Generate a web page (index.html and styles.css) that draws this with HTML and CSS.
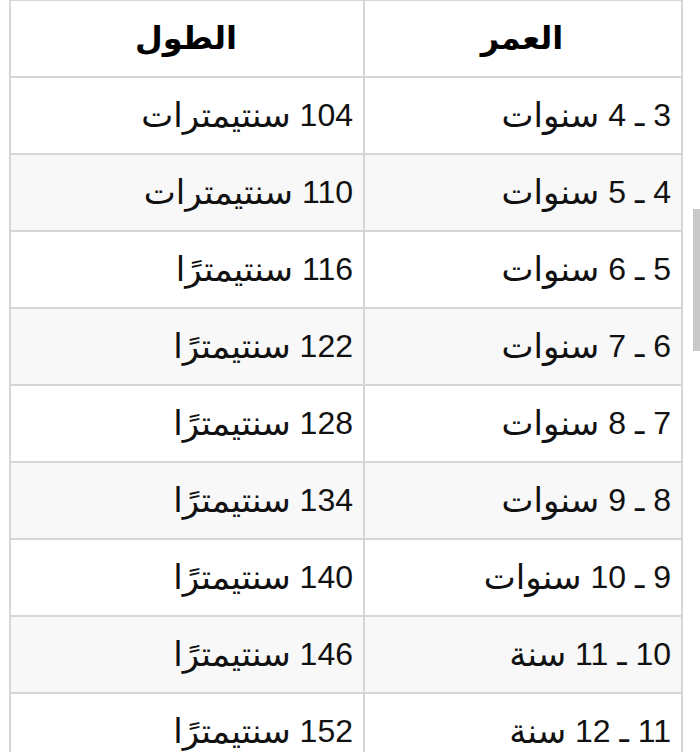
FILE: index.html
```html
<!DOCTYPE html>
<html lang="ar" dir="rtl">
<head>
<meta charset="utf-8">
<title>جدول المقاسات</title>
<link rel="stylesheet" href="styles.css">
</head>
<body>
<div class="page">
  <div class="table">
    <div class="cell head">العمر</div>
    <div class="cell head">الطول</div>

    <div class="cell">3 ـ 4 <span class="ar">سنوات</span></div>
    <div class="cell">104 <span class="ar">سنتيمترات</span></div>

    <div class="cell alt">4 ـ 5 <span class="ar">سنوات</span></div>
    <div class="cell alt">110 <span class="ar">سنتيمترات</span></div>

    <div class="cell">5 ـ 6 <span class="ar">سنوات</span></div>
    <div class="cell">116 <span class="ar">سنتيمترًا</span></div>

    <div class="cell alt">6 ـ 7 <span class="ar">سنوات</span></div>
    <div class="cell alt">122 <span class="ar">سنتيمترًا</span></div>

    <div class="cell">7 ـ 8 <span class="ar">سنوات</span></div>
    <div class="cell">128 <span class="ar">سنتيمترًا</span></div>

    <div class="cell alt">8 ـ 9 <span class="ar">سنوات</span></div>
    <div class="cell alt">134 <span class="ar">سنتيمترًا</span></div>

    <div class="cell">9 ـ 10 <span class="ar">سنوات</span></div>
    <div class="cell">140 <span class="ar">سنتيمترًا</span></div>

    <div class="cell alt">10 ـ 11 <span class="ar">سنة</span></div>
    <div class="cell alt">146 <span class="ar">سنتيمترًا</span></div>

    <div class="cell">11 ـ 12 <span class="ar">سنة</span></div>
    <div class="cell">152 <span class="ar">سنتيمترًا</span></div>
  </div>
  <div class="scrollbar"></div>
</div>
</body>
</html>
```

FILE: styles.css
```css
html, body {
  margin: 0;
  padding: 0;
  background: #ffffff;
}

body {
  width: 700px;
  height: 752px;
  overflow: hidden;
  font-family: "Liberation Sans", "DejaVu Sans", sans-serif;
  color: #111111;
}

.page {
  position: relative;
  width: 700px;
  height: 752px;
  overflow: hidden;
}

.table {
  display: grid;
  direction: rtl;
  grid-template-columns: 318px 354px;
  grid-auto-rows: 77px;
  width: 674px;
  margin-right: 17px;
  border-top: 1px solid #d6d6d6;
  border-right: 2px solid #d6d6d6;
  box-sizing: border-box;
}

.cell {
  display: flex;
  align-items: center;
  justify-content: flex-start;
  gap: 0;
  padding: 0 10px 2px 8px;
  border-left: 2px solid #d6d6d6;
  border-bottom: 2px solid #d6d6d6;
  font-size: 32px;
  line-height: 1;
  background: #ffffff;
  white-space: pre;
}

.cell .ar {
  font-size: 34px;
}

.cell.alt {
  background: #f8f8f8;
}

.cell.head {
  justify-content: center;
  font-weight: bold;
  font-size: 32px;
  color: #000000;
}

.scrollbar {
  position: absolute;
  right: 0;
  top: 209px;
  width: 7px;
  height: 142px;
  background: #c9c9c9;
}
```
